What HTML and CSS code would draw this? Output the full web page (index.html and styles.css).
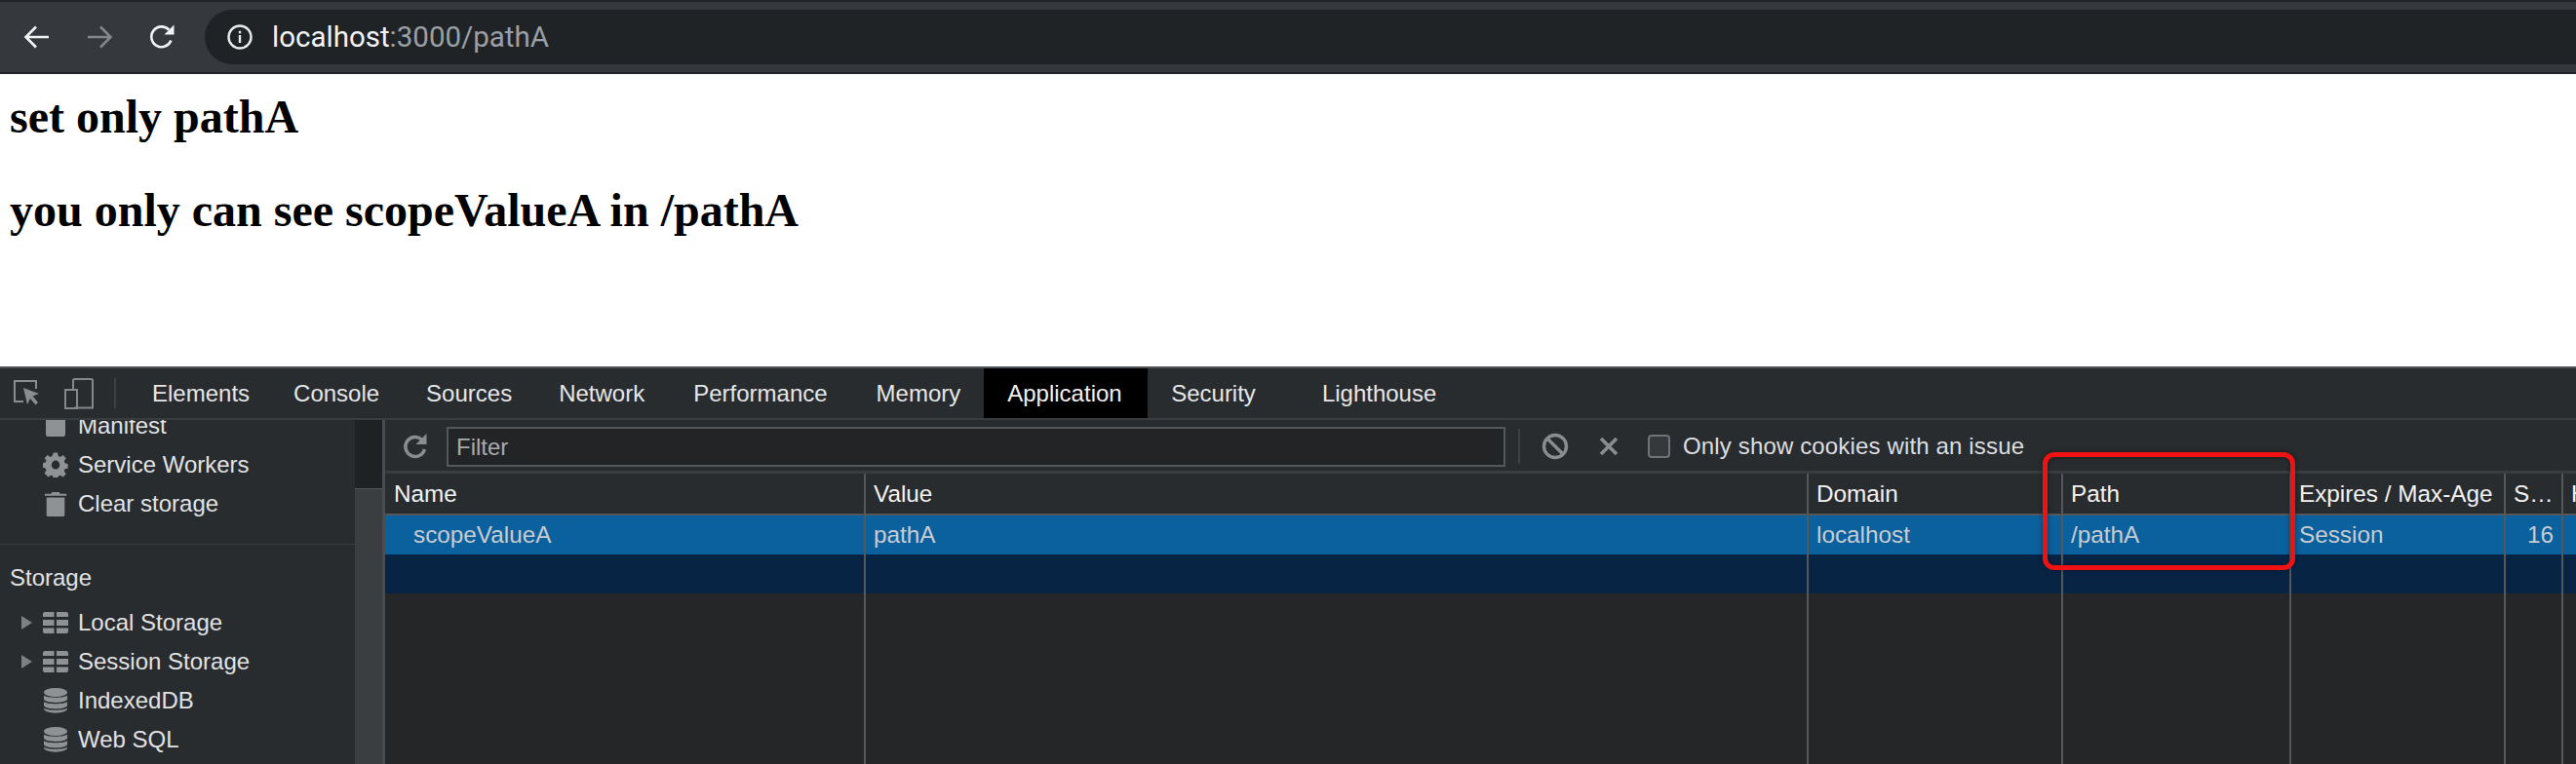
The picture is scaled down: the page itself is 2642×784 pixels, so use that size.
FILE: index.html
```html
<!DOCTYPE html>
<html lang="en">
<head>
<meta charset="utf-8">
<title>localhost:3000/pathA</title>
<link rel="stylesheet" href="styles.css">
</head>
<body>
<header class="browser-bar">
  <nav class="nav-buttons">
    <svg class="nav-icon" viewBox="0 0 28 28"><path d="M26 14H3M13 3.5 2.500 14 13 24.500" fill="none" stroke="#f1f3f4" stroke-width="2.600"/></svg>
    <svg class="nav-icon" viewBox="0 0 28 28"><path d="M2 14h23M15 3.500 25.500 14 15 24.500" fill="none" stroke="#85888b" stroke-width="2.600"/></svg>
    <svg class="nav-icon" viewBox="0 0 28 28"><path d="M23.400 17.500A10.400 10.400 0 1 1 21.300 6.700" fill="none" stroke="#f1f3f4" stroke-width="2.600"/><path d="M26.500 1.500v10h-10z" fill="#f1f3f4"/></svg>
  </nav>
  <div class="omnibox">
    <svg class="info-icon" viewBox="0 0 26 26"><circle cx="13" cy="13" r="11.500" fill="none" stroke="#e8eaed" stroke-width="2.400"/><path d="M11.800 11h2.400v8h-2.400zM11.800 6.800h2.400v2.400h-2.400z" fill="#e8eaed"/></svg>
    <span class="url"><span class="url-host">localhost</span>:3000/pathA</span>
  </div>
</header>

<main class="page">
  <h1>set only pathA</h1>
  <h1>you only can see scopeValueA in /pathA</h1>
</main>

<section class="devtools">
  <div class="tabbar">
    <div class="tool-icons">
      <svg class="inspect" viewBox="0 0 28 30"><path d="M11 23H2V2h22v8" fill="none" stroke="#8a8d90" stroke-width="2"/><path d="M11 9l16 6-6.500 2.500L26 24l-2.500 2.500-5.500-6.500L15 26z" fill="#8a8d90"/></svg>
      <svg class="device" viewBox="0 0 30 32"><path d="M9 11V2.500a1.500 1.500 0 0 1 1.500-1.500h17A1.500 1.500 0 0 1 29 2.500v28H10" fill="none" stroke="#85888b" stroke-width="2"/><rect x="1" y="12" width="12" height="19" fill="none" stroke="#85888b" stroke-width="2"/></svg>
    </div>
    <span class="tab tab-first">Elements</span>
    <span class="tab">Console</span>
    <span class="tab">Sources</span>
    <span class="tab">Network</span>
    <span class="tab tab-nudged">Performance</span>
    <span class="tab tab-nudged">Memory</span>
    <span class="tab tab-active">Application</span>
    <span class="tab">Security</span>
    <span class="tab tab-last">Lighthouse</span>
  </div>

  <div class="panels">
    <aside class="sidebar">
      <div class="side-list">
        <div class="side-clip">
          <div class="side-row">
            <span class="arrow"></span>
            <svg class="side-icon" viewBox="0 0 26 26"><rect x="3" y="0" width="20" height="24" rx="2" fill="#8f9295"/></svg>
            <span>Manifest</span>
          </div>
          <div class="side-row">
            <span class="arrow"></span>
            <svg class="side-icon" viewBox="0 0 26 28"><path d="M10.500 0h5l.8 4 2.300 1 3.500-2.200 3.500 3.600-2.200 3.400 1 2.300 3.600.9v0 5l-3.600.8-1 2.400 2.200 3.400-3.500 3.500-3.500-2.200-2.300 1-.8 3.800h-5l-.8-3.800-2.300-1-3.500 2.200L-.5 23.600l2.200-3.400-1-2.400L-3 17v-5l3.700-.9 1-2.300L-.5 6.400 3 2.800l3.500 2.200 2.300-1zM13 9a5 5 0 1 0 0 10 5 5 0 0 0 0-10z" fill="#8f9295" fill-rule="evenodd" transform="translate(1.200 .6) scale(.91 .96)"/></svg>
            <span>Service Workers</span>
          </div>
          <div class="side-row">
            <span class="arrow"></span>
            <svg class="side-icon" viewBox="0 0 26 28"><path d="M1 3h7l1-2h8l1 2h7v2H1z" fill="#8f9295"/><path d="M3 7h20v19a2 2 0 0 1-2 2H5a2 2 0 0 1-2-2z" fill="#8f9295"/></svg>
            <span>Clear storage</span>
          </div>
        </div>
        <div class="side-section">
          <div class="side-title">Storage</div>
          <div class="side-row">
            <span class="arrow"><svg class="tri" viewBox="0 0 11 14"><path d="M0 0l11 7-11 7z" fill="#7e8184"/></svg></span>
            <svg class="side-icon" viewBox="0 0 26 22"><path d="M0 2a2 2 0 0 1 2-2h9.500v5H0zM14 0h10a2 2 0 0 1 2 2v3H14zM0 8h11.500v6H0zM14 8h12v6H14zM0 16.500h11.500V22H2a2 2 0 0 1-2-2zM14 16.500h12V20a2 2 0 0 1-2 2H14z" fill="#8f9295"/></svg>
            <span>Local Storage</span>
          </div>
          <div class="side-row">
            <span class="arrow"><svg class="tri" viewBox="0 0 11 14"><path d="M0 0l11 7-11 7z" fill="#7e8184"/></svg></span>
            <svg class="side-icon" viewBox="0 0 26 22"><path d="M0 2a2 2 0 0 1 2-2h9.500v5H0zM14 0h10a2 2 0 0 1 2 2v3H14zM0 8h11.500v6H0zM14 8h12v6H14zM0 16.500h11.500V22H2a2 2 0 0 1-2-2zM14 16.500h12V20a2 2 0 0 1-2 2H14z" fill="#8f9295"/></svg>
            <span>Session Storage</span>
          </div>
          <div class="side-row">
            <span class="arrow"></span>
            <svg class="side-icon" viewBox="0 0 26 26"><ellipse cx="13" cy="4.500" rx="12" ry="4.500" fill="#8f9295"/><path d="M1 7.500c2 3 22 3 24 0v4c-1 4.500-23 4.500-24 0zM1 14c2 3 22 3 24 0v4c-1 4.500-23 4.500-24 0zM1 20.500c2 3 22 3 24 0v1c-1 5.500-23 5.500-24 0z" fill="#8f9295"/></svg>
            <span>IndexedDB</span>
          </div>
          <div class="side-row">
            <span class="arrow"></span>
            <svg class="side-icon" viewBox="0 0 26 26"><ellipse cx="13" cy="4.500" rx="12" ry="4.500" fill="#8f9295"/><path d="M1 7.500c2 3 22 3 24 0v4c-1 4.500-23 4.500-24 0zM1 14c2 3 22 3 24 0v4c-1 4.500-23 4.500-24 0zM1 20.500c2 3 22 3 24 0v1c-1 5.500-23 5.500-24 0z" fill="#8f9295"/></svg>
            <span>Web SQL</span>
          </div>
        </div>
      </div>
      <div class="side-scroll"><div class="side-thumb"></div></div>
    </aside>

    <div class="main-panel">
      <div class="toolbar">
        <svg class="reload" viewBox="0 0 26 28"><path d="M22.500 17A10 10 0 1 1 19.500 7" fill="none" stroke="#8a8d90" stroke-width="3.400"/><path d="M24.500 1v11h-11z" fill="#8a8d90"/></svg>
        <div class="filter">Filter</div>
        <span class="tool-divider"></span>
        <svg class="block" viewBox="0 0 28 28"><circle cx="14" cy="14" r="11.500" fill="none" stroke="#8a8d90" stroke-width="3.400"/><path d="M6 6l16 16" stroke="#8a8d90" stroke-width="3.400"/></svg>
        <svg class="clear" viewBox="0 0 20 20"><path d="M2 2l16 16M18 2 2 18" stroke="#8a8d90" stroke-width="3.600"/></svg>
        <span class="checkbox"></span>
        <span class="check-label">Only show cookies with an issue</span>
      </div>
      <table class="cookies">
        <colgroup>
          <col class="c-name"><col class="c-value"><col class="c-domain"><col class="c-path"><col class="c-expires"><col class="c-size"><col class="c-last">
        </colgroup>
        <thead>
          <tr><th>Name</th><th>Value</th><th>Domain</th><th>Path</th><th>Expires / Max-Age</th><th>S…</th><th>H</th></tr>
        </thead>
        <tbody>
          <tr class="row-selected"><td class="cell-name">scopeValueA</td><td>pathA</td><td>localhost</td><td>/pathA</td><td>Session</td><td class="cell-num">16</td><td></td></tr>
          <tr class="row-empty"><td></td><td></td><td></td><td></td><td></td><td></td><td></td></tr>
          <tr class="row-fill"><td></td><td></td><td></td><td></td><td></td><td></td><td></td></tr>
        </tbody>
      </table>
    </div>
  </div>
  <div class="highlight"></div>
</section>
</body>
</html>
```

FILE: styles.css
```css
* { box-sizing: border-box; }
html, body { margin: 0; padding: 0; height: 784px; overflow: hidden; background: #fff; }
body { font-family: "Liberation Sans", Arial, sans-serif; display: flex; flex-direction: column; }

.browser-bar {
  height: 76px;
  flex: none;
  display: flex;
  align-items: center;
  background: #35383c;
  border-top: 2px solid #202428;
  border-bottom: 2px solid #202428;
}
.nav-buttons { display: flex; align-items: center; gap: 36px; padding-left: 24px; width: 210px; flex: none; }
.nav-icon { width: 28px; height: 28px; flex: none; }
.omnibox {
  flex: 1;
  height: 56px;
  background: #202326;
  border-radius: 28px 0 0 28px;
  display: flex;
  align-items: center;
  padding-left: 23px;
  gap: 20px;
}
.info-icon { width: 26px; height: 26px; flex: none; }
.url { font-family: Roboto, sans-serif; font-size: 29.500px; color: #9aa0a6; }
.url-host { color: #f1f3f4; }

.page { height: 300px; flex: none; background: #fff; padding: 16px 0 0 10px; color: #000; }
h1 { margin: 0 0 40px; font-family: "Liberation Serif", "Times New Roman", serif; font-weight: 700; font-size: 48px; line-height: 56px; }

.devtools { position: relative; flex: 1; min-height: 0; background: #292c2f; color: #e4e6e8; font-size: 24px; display: flex; flex-direction: column; border-top: 2px solid #505356; }

.tabbar { height: 53px; flex: none; display: flex; align-items: stretch; border-bottom: 2px solid #3a3d40; }
.tool-icons { width: 132px; flex: none; position: relative; display: flex; align-items: center; padding-left: 13px; gap: 25px; }
.tool-icons::after { content: ""; position: absolute; right: 13px; top: 10px; bottom: 10px; width: 2px; background: #3d4043; }
.inspect { width: 28px; height: 30px; flex: none; }
.device { width: 30px; height: 32px; flex: none; }
.tab { display: flex; align-items: center; padding: 0 24px; height: 51px; color: #e4e6e8; }
.tab-first { margin-right: -3px; }
.tab-nudged { margin-left: 2px; }
.tab-active { background: #000; color: #f0f0f0; padding: 0 26.500px 0 24px; }
.tab-last { margin-left: 20px; }

.panels { flex: 1; min-height: 0; display: flex; }
.sidebar { width: 395px; flex: none; display: flex; border-right: 3px solid #4a4d50; overflow: hidden; }
.side-list { flex: 1; min-width: 0; overflow: hidden; }
.side-clip { margin-top: -14px; }
.side-row { height: 40px; display: flex; align-items: center; padding-left: 22px; color: #e0e2e4; white-space: nowrap; }
.arrow { width: 22px; flex: none; display: flex; align-items: center; }
.tri { width: 11px; height: 14px; }
.side-icon { width: 26px; height: 26px; flex: none; margin-right: 10px; }
.side-section { margin-top: 21px; border-top: 1px solid #3a3d40; padding-top: 14px; }
.side-title { height: 40px; line-height: 40px; padding-left: 10px; margin-bottom: 6px; color: #e0e2e4; }
.side-scroll { width: 28px; flex: none; background: #1f2123; padding-top: 70px; }
.side-thumb { height: 100%; background: #3b3e41; border-top: 1px solid #55585a; }

.main-panel { flex: 1; min-width: 0; display: flex; flex-direction: column; }
.toolbar { height: 55px; flex: none; display: flex; align-items: center; border-bottom: 3px solid #3a3d40; padding: 2px 0 0 18px; }
.reload { width: 26px; height: 28px; flex: none; margin-right: 19px; }
.filter { width: 1086px; height: 41px; flex: none; background: #222426; border: 2px solid #55585a; color: #a8abae; line-height: 37px; padding-left: 8px; }
.tool-divider { width: 2px; height: 36px; background: #3d4043; margin-left: 13px; margin-right: 22px; flex: none; }
.block { width: 28px; height: 28px; flex: none; margin-right: 31px; }
.clear { width: 20px; height: 20px; flex: none; margin-right: 30px; }
.checkbox { width: 23px; height: 24px; flex: none; background: #36393c; border: 2px solid #707376; border-radius: 4px; margin-right: 13px; }
.check-label { color: #dcdee0; white-space: nowrap; letter-spacing: .15px; }

.cookies { flex: 1; width: 100%; table-layout: fixed; border-collapse: collapse; font-size: 24.300px; }
.c-name { width: 492px; }
.c-value { width: 967px; }
.c-domain { width: 261px; }
.c-path { width: 234px; }
.c-expires { width: 220px; }
.c-size { width: 59px; }
th, td { border-left: 2px solid #55585a; padding: 0 0 0 8px; text-align: left; font-weight: 400; white-space: nowrap; overflow: hidden; }
th:first-child, td:first-child { border-left: 0; }
th:first-child { padding-left: 9px; }
th { height: 42px; color: #f2f2f2; border-bottom: 2px solid #55585a; }
td { color: #c8ccd2; }
.row-selected td { height: 41px; background: #0b619d; }
.row-empty td { height: 40px; background: #072445; }
.row-fill td { background: #242628; }
td.cell-name { padding-left: 29px; }
.cell-num { text-align: right; padding-right: 8px; }

.highlight { position: absolute; left: 2095px; top: 86px; width: 259px; height: 121px; border: 5px solid #f01212; border-radius: 12px; box-shadow: 0 0 5px rgba(0, 0, 0, .45), inset 0 0 5px rgba(0, 0, 0, .45); }
```
